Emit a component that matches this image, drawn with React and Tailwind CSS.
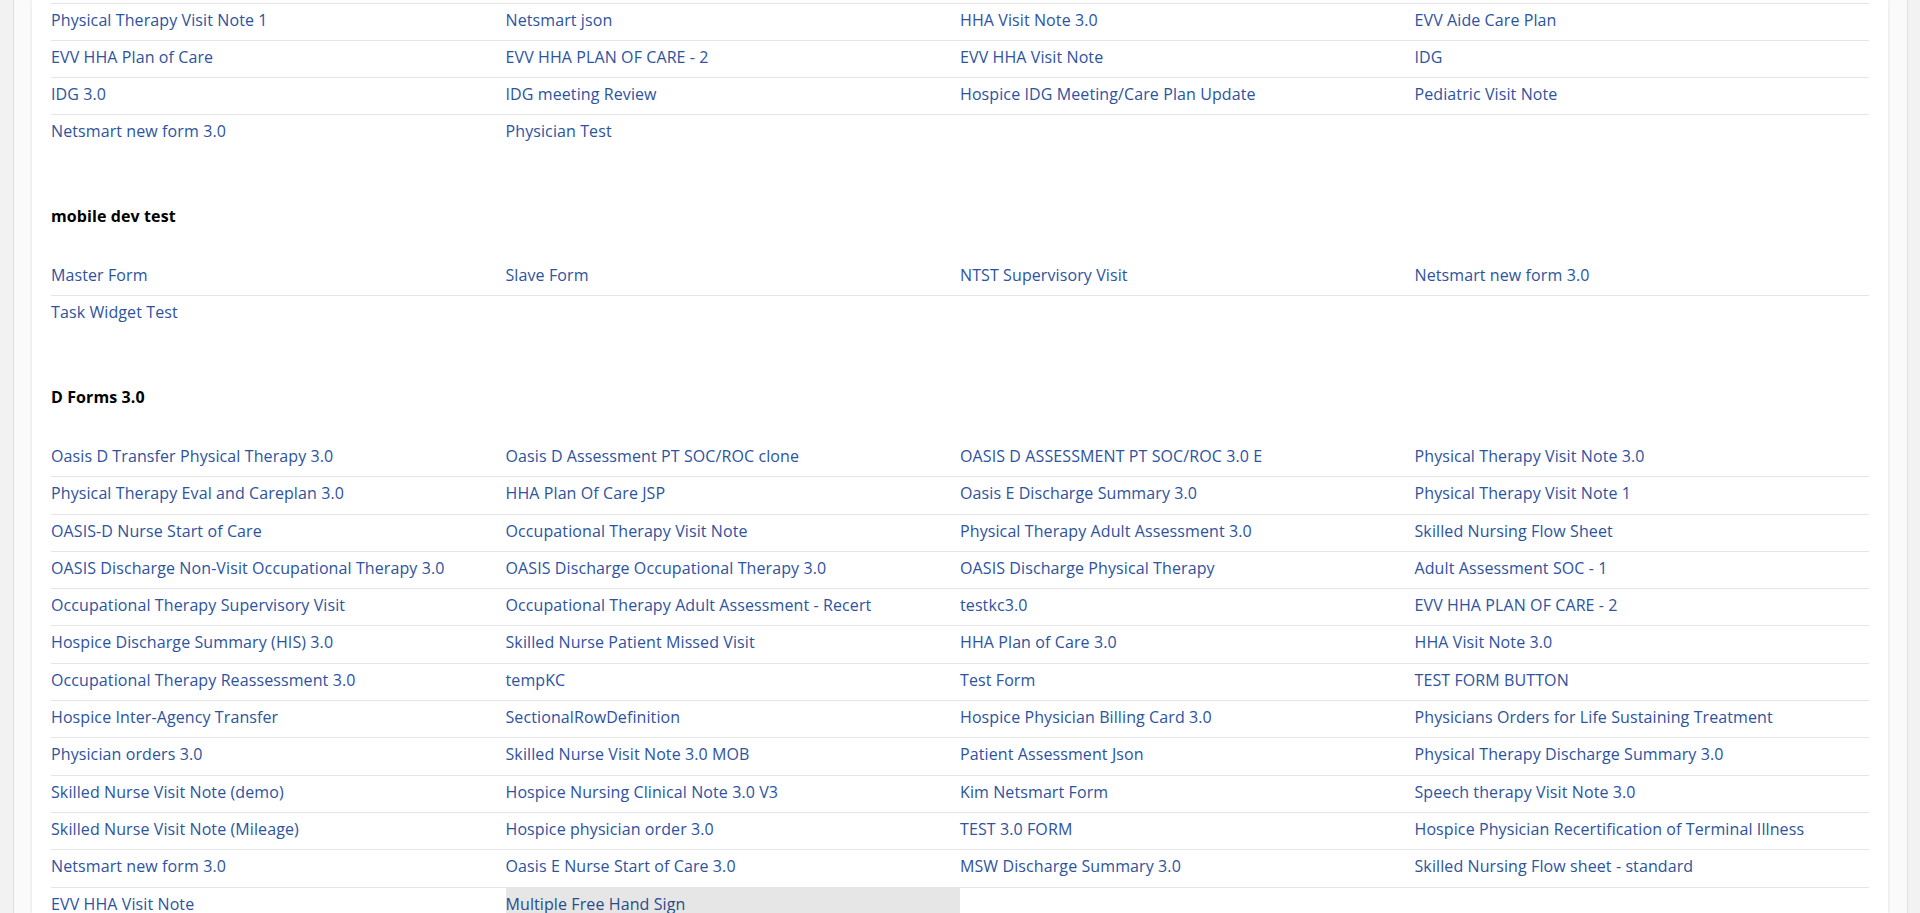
import React from "react";

const section1 = [
  ["Physical Therapy Visit Note 1", "Netsmart json", "HHA Visit Note 3.0", "EVV Aide Care Plan"],
  ["EVV HHA Plan of Care", "EVV HHA PLAN OF CARE - 2", "EVV HHA Visit Note", "IDG"],
  ["IDG 3.0", "IDG meeting Review", "Hospice IDG Meeting/Care Plan Update", "Pediatric Visit Note"],
  ["Netsmart new form 3.0", "Physician Test"],
];

const mobile = [
  ["Master Form", "Slave Form", "NTST Supervisory Visit", "Netsmart new form 3.0"],
  ["Task Widget Test"],
];

const dforms = [
  ["Oasis D Transfer Physical Therapy 3.0", "Oasis D Assessment PT SOC/ROC clone", "OASIS D ASSESSMENT PT SOC/ROC 3.0 E", "Physical Therapy Visit Note 3.0"],
  ["Physical Therapy Eval and Careplan 3.0", "HHA Plan Of Care JSP", "Oasis E Discharge Summary 3.0", "Physical Therapy Visit Note 1"],
  ["OASIS-D Nurse Start of Care", "Occupational Therapy Visit Note", "Physical Therapy Adult Assessment 3.0", "Skilled Nursing Flow Sheet"],
  ["OASIS Discharge Non-Visit Occupational Therapy 3.0", "OASIS Discharge Occupational Therapy 3.0", "OASIS Discharge Physical Therapy", "Adult Assessment SOC - 1"],
  ["Occupational Therapy Supervisory Visit", "Occupational Therapy Adult Assessment - Recert", "testkc3.0", "EVV HHA PLAN OF CARE - 2"],
  ["Hospice Discharge Summary (HIS) 3.0", "Skilled Nurse Patient Missed Visit", "HHA Plan of Care 3.0", "HHA Visit Note 3.0"],
  ["Occupational Therapy Reassessment 3.0", "tempKC", "Test Form", "TEST FORM BUTTON"],
  ["Hospice Inter-Agency Transfer", "SectionalRowDefinition", "Hospice Physician Billing Card 3.0", "Physicians Orders for Life Sustaining Treatment"],
  ["Physician orders 3.0", "Skilled Nurse Visit Note 3.0 MOB", "Patient Assessment Json", "Physical Therapy Discharge Summary 3.0"],
  ["Skilled Nurse Visit Note (demo)", "Hospice Nursing Clinical Note 3.0 V3", "Kim Netsmart Form", "Speech therapy Visit Note 3.0"],
  ["Skilled Nurse Visit Note (Mileage)", "Hospice physician order 3.0", "TEST 3.0 FORM", "Hospice Physician Recertification of Terminal Illness"],
  ["Netsmart new form 3.0", "Oasis E Nurse Start of Care 3.0", "MSW Discharge Summary 3.0", "Skilled Nursing Flow sheet - standard"],
  ["EVV HHA Visit Note", "Multiple Free Hand Sign"],
];

function Row({ cells, bordered, hoverIndex, tall }) {
  let cls;
  if (tall) {
    cls = bordered
      ? "flex box-border h-[37.3px] border-t border-[#e6e6e6]"
      : "flex box-border h-[36.3px]";
  } else {
    cls = bordered
      ? "flex box-border h-[37px] border-t border-[#e6e6e6]"
      : "flex box-border h-[36px]";
  }
  return (
    <div className={cls}>
      {[0, 1, 2, 3].map((i) => {
        const text = cells[i];
        const hovered = hoverIndex === i;
        return (
          <div
            key={i}
            className={
              hovered
                ? "w-1/4 pt-[4px] leading-6 bg-[#e6e6e6]"
                : "w-1/4 pt-[4px] leading-6"
            }
          >
            {text ? (
              <a
                className={
                  hovered
                    ? "text-[16px] tracking-[0.1px] text-[#2b4b86] cursor-pointer"
                    : "text-[16px] tracking-[0.1px] text-[#2d539f] cursor-pointer"
                }
              >
                {text}
              </a>
            ) : null}
          </div>
        );
      })}
    </div>
  );
}

function Table({ rows, firstBordered, hoverRow, hoverCol, tall }) {
  return (
    <div className="flex flex-col">
      {rows.map((r, idx) => (
        <Row
          key={idx}
          cells={r}
          tall={tall}
          bordered={idx > 0 || firstBordered}
          hoverIndex={idx === hoverRow ? hoverCol : -1}
        />
      ))}
    </div>
  );
}

function Section({ title, rows, hoverRow, hoverCol, tall }) {
  return (
    <div className="flex flex-col pt-[52.5px]">
      <h4 className="text-[16px] leading-6 font-bold tracking-[0.1px] text-black">{title}</h4>
      <div className="mt-[31.5px]">
        <Table rows={rows} hoverRow={hoverRow} hoverCol={hoverCol} tall={tall} />
      </div>
    </div>
  );
}

export default function App() {
  return (
    <div
      className="flex h-[913px] w-[1920px] overflow-hidden bg-[#fafafa]"
      style={{ fontFamily: '"Open Sans", "Liberation Sans", sans-serif' }}
    >
      <div className="w-[14px] shrink-0 bg-[#f2f2f2] border-r border-[#e0e0e0]" />
      <div className="w-[18px] shrink-0" />
      <div className="w-[1856px] shrink-0 bg-white shadow-[0_0_3px_rgba(0,0,0,0.13)] px-[19px] pt-[3px]">
        <Table rows={section1} firstBordered />
        <Section title="mobile dev test" rows={mobile} />
        <Section title="D Forms 3.0" rows={dforms} hoverRow={12} hoverCol={1} tall />
      </div>
      <div className="w-[19px] shrink-0" />
      <div className="flex-1 bg-[#f2f2f2] border-l border-[#e0e0e0]" />
    </div>
  );
}
